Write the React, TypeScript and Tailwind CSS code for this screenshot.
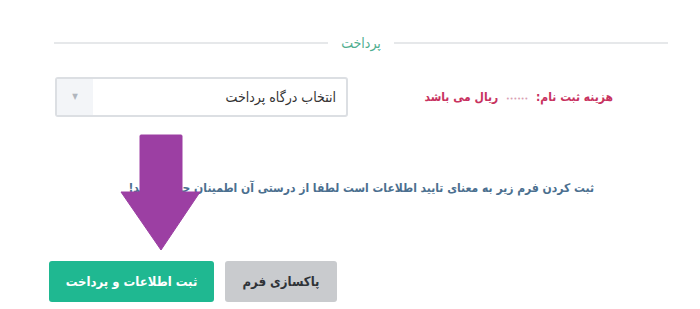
import React from "react";

export default function App() {
  const font = { fontFamily: '"DejaVu Sans Condensed", "DejaVu Sans", sans-serif' };
  return (
    <div className="relative w-[700px] h-[309px] bg-white overflow-hidden" style={font}>
      {/* legend row */}
      <div className="flex items-center pt-[34px] pl-[54px] pr-[32px] h-[52px]">
        <div className="flex-1 h-[2px] bg-[#e6e8ea]" />
        <div className="px-[13px] text-[14px] text-[#4fae8f] leading-none" dir="rtl">پرداخت</div>
        <div className="flex-1 h-[2px] bg-[#e6e8ea]" />
      </div>
      {/* select + price */}
      <div className="flex items-center justify-between pl-[55px] pr-[87px] mt-[25px]">
        <div className="flex w-[293px] h-[40px] border-2 border-[#dcdfe3] rounded-[3px] overflow-hidden">
          <div className="w-[36px] bg-[#f3f5f8] flex items-center justify-center text-[8px] text-[#b0b6be]">▼</div>
          <div className="flex-1 flex items-center justify-end pr-[10px] text-[14px] text-[#333]">
            <span dir="rtl">انتخاب درگاه پرداخت</span>
          </div>
        </div>
        <div className="text-[12px] font-bold text-[#c8325f]" dir="rtl">
          هزینه ثبت نام: <span className="text-[#d9a0b3] text-[7px] font-normal mx-[4px] tracking-[-1px]">••••••</span> ریال می باشد
        </div>
      </div>
      {/* info */}
      <div className="flex justify-end pr-[106px] mt-[62px]">
        <div className="text-[12px] font-bold text-[#4b6f8f]" dir="rtl">
          ثبت کردن فرم زیر به معنای تایید اطلاعات است لطفا از درستی آن اطمینان حاصل کنید!
        </div>
      </div>
      {/* buttons */}
      <div className="flex gap-[11px] pl-[49px] mt-[64px]">
        <div className="w-[165px] h-[41px] bg-[#1fb891] rounded-[3px] flex items-center justify-center text-white text-[13px] font-bold" dir="rtl">
          ثبت اطلاعات و پرداخت
        </div>
        <div className="w-[112px] h-[41px] bg-[#c9cbce] rounded-[3px] flex items-center justify-center text-[#2f3338] text-[13px] font-bold" dir="rtl">
          پاکسازی فرم
        </div>
      </div>
      {/* arrow overlay */}
      <svg className="absolute left-[120px] top-[134px]" width="82" height="118" viewBox="0 0 82 118">
        <path d="M21 1 H61 Q62 1 62 2 V58 H80 L41 116 L1 58 H20 V2 Q20 1 21 1 Z" fill="#9c3fa3" stroke="#9c3fa3" strokeWidth="1" strokeLinejoin="round" />
      </svg>
    </div>
  );
}
